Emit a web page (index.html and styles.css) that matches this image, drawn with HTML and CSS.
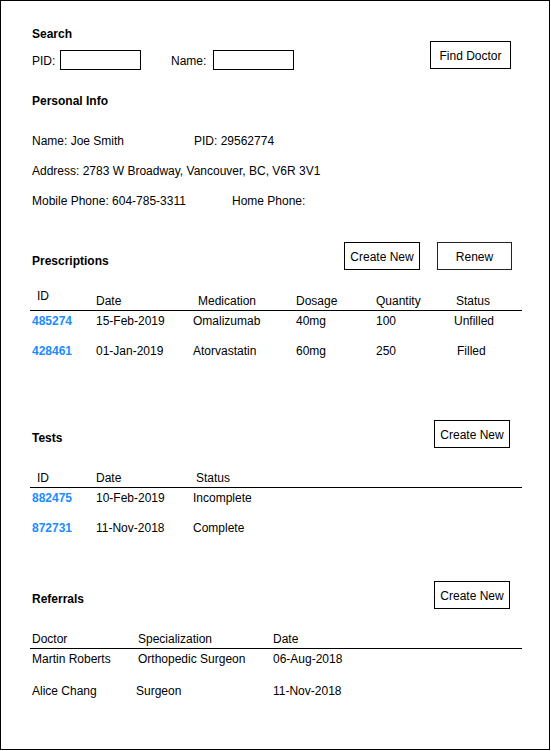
FILE: index.html
```html
<!DOCTYPE html>
<html>
<head>
<meta charset="utf-8">
<link rel="stylesheet" href="styles.css">
</head>
<body>
<div class="frame">
  <section class="search">
    <div class="search-left">
      <div class="h">Search</div>
      <div class="search-row">
        <span class="lbl lbl-pid">PID:</span>
        <span class="field"></span>
        <span class="lbl lbl-name">Name:</span>
        <span class="field"></span>
      </div>
    </div>
    <div class="btn btn-find">Find Doctor</div>
  </section>

  <div class="h h-info">Personal Info</div>
  <div class="info-row info-first"><span class="info-name">Name: Joe Smith</span><span>PID: 29562774</span></div>
  <div class="info-row"><span>Address: 2783 W Broadway, Vancouver, BC, V6R 3V1</span></div>
  <div class="info-row"><span class="info-mobile">Mobile Phone: 604-785-3311</span><span>Home Phone:</span></div>

  <div class="head-row head-presc">
    <div class="h h-sec">Prescriptions</div>
    <div class="btns">
      <div class="btn">Create New</div>
      <div class="btn btn-renew">Renew</div>
    </div>
  </div>
  <div class="table t-presc">
    <div class="tr th th-presc">
      <div class="c p7 up">ID</div>
      <div class="c">Date</div>
      <div class="c p5">Medication</div>
      <div class="c">Dosage</div>
      <div class="c">Quantity</div>
      <div class="c p3">Status</div>
    </div>
    <div class="tr row">
      <div class="c p2 link">485274</div>
      <div class="c">15-Feb-2019</div>
      <div class="c">Omalizumab</div>
      <div class="c">40mg</div>
      <div class="c">100</div>
      <div class="c p1">Unfilled</div>
    </div>
    <div class="tr row">
      <div class="c p2 link">428461</div>
      <div class="c">01-Jan-2019</div>
      <div class="c">Atorvastatin</div>
      <div class="c">60mg</div>
      <div class="c">250</div>
      <div class="c p4">Filled</div>
    </div>
  </div>

  <div class="head-row head-tests">
    <div class="h h-sec">Tests</div>
    <div class="btn">Create New</div>
  </div>
  <div class="table t-tests">
    <div class="tr th th-tests">
      <div class="c p7">ID</div>
      <div class="c">Date</div>
      <div class="c p3">Status</div>
    </div>
    <div class="tr row">
      <div class="c p2 link">882475</div>
      <div class="c">10-Feb-2019</div>
      <div class="c">Incomplete</div>
    </div>
    <div class="tr row">
      <div class="c p2 link">872731</div>
      <div class="c">11-Nov-2018</div>
      <div class="c">Complete</div>
    </div>
  </div>

  <div class="head-row head-ref">
    <div class="h h-sec">Referrals</div>
    <div class="btn">Create New</div>
  </div>
  <div class="table t-ref">
    <div class="tr th th-ref">
      <div class="c p2">Doctor</div>
      <div class="c p2">Specialization</div>
      <div class="c">Date</div>
    </div>
    <div class="tr row row-ref">
      <div class="c p2">Martin Roberts</div>
      <div class="c p2">Orthopedic Surgeon</div>
      <div class="c">06-Aug-2018</div>
    </div>
    <div class="tr row row-ref">
      <div class="c p2">Alice Chang</div>
      <div class="c">Surgeon</div>
      <div class="c">11-Nov-2018</div>
    </div>
  </div>
</div>
</body>
</html>
```

FILE: styles.css
```css
* { box-sizing: border-box; }
html, body { margin: 0; padding: 0; background: #fff; }
body {
  font-family: "Liberation Sans", Arial, Helvetica, sans-serif;
  font-size: 12px;
  line-height: 16px;
  color: #000;
}
.frame {
  width: 550px;
  height: 750px;
  border: 1px solid #000;
  padding: 25px 0 0 31px;
  overflow: hidden;
}
.h { font-weight: bold; height: 14px; }

.search { display: flex; justify-content: space-between; padding-right: 38px; }
.search-row { display: flex; align-items: center; margin-top: 10px; height: 20px; }
.lbl { display: inline-block; padding-top: 2px; }
.lbl-pid { width: 28px; }
.lbl-name { width: 42px; margin-left: 30px; }
.field { display: inline-block; width: 81px; height: 20px; border: 1px solid #000; }

.btn {
  border: 1px solid #000;
  background: #fff;
  width: 76px;
  height: 28px;
  padding-top: 2px;
  display: flex;
  align-items: center;
  justify-content: center;
  white-space: nowrap;
}
.btn-find { width: 81px; margin-top: 15px; }
.btn-renew { width: 75px; border-color: #222; }

.h-info { margin-top: 23px; }
.info-row { display: flex; height: 14px; margin-top: 16px; white-space: nowrap; }
.info-first { margin-top: 26px; }
.info-name { width: 162px; }
.info-mobile { width: 200px; }

.head-row { display: flex; justify-content: space-between; align-items: flex-start; height: 28px; }
.h-sec { margin-top: 11px; }
.head-presc { margin-top: 35px; padding-right: 37px; }
.head-tests { margin-top: 49px; padding-right: 39px; }
.head-tests .h-sec, .head-ref .h-sec { margin-top: 10px; }
.head-ref { margin-top: 33px; padding-right: 39px; }
.btns { display: flex; gap: 17px; }

.table { margin-left: -2px; width: 492px; }
.tr { display: grid; white-space: nowrap; }
.t-presc .tr { grid-template-columns: 66px 97px 103px 80px 77px 1fr; }
.t-tests .tr { grid-template-columns: 66px 97px 1fr; }
.t-ref .tr { grid-template-columns: 106px 137px 1fr; }

.th { align-items: end; border-bottom: 1px solid #000; }
.th .c { padding-bottom: 1px; }
.th .c.up { padding-bottom: 6px; }
.th-presc { height: 23px; margin-top: 18px; }
.th-tests { height: 21px; margin-top: 19px; }
.th-ref { height: 21px; margin-top: 19px; }

.row { height: 30px; padding-top: 2px; }
.row-ref { height: 32px; }

.c { min-width: 0; }
.p1 { padding-left: 1px; }
.p2 { padding-left: 2px; }
.p3 { padding-left: 3px; }
.p4 { padding-left: 4px; }
.p5 { padding-left: 5px; }
.p7 { padding-left: 7px; }
.link { color: #1a8cff; font-weight: bold; }
```
